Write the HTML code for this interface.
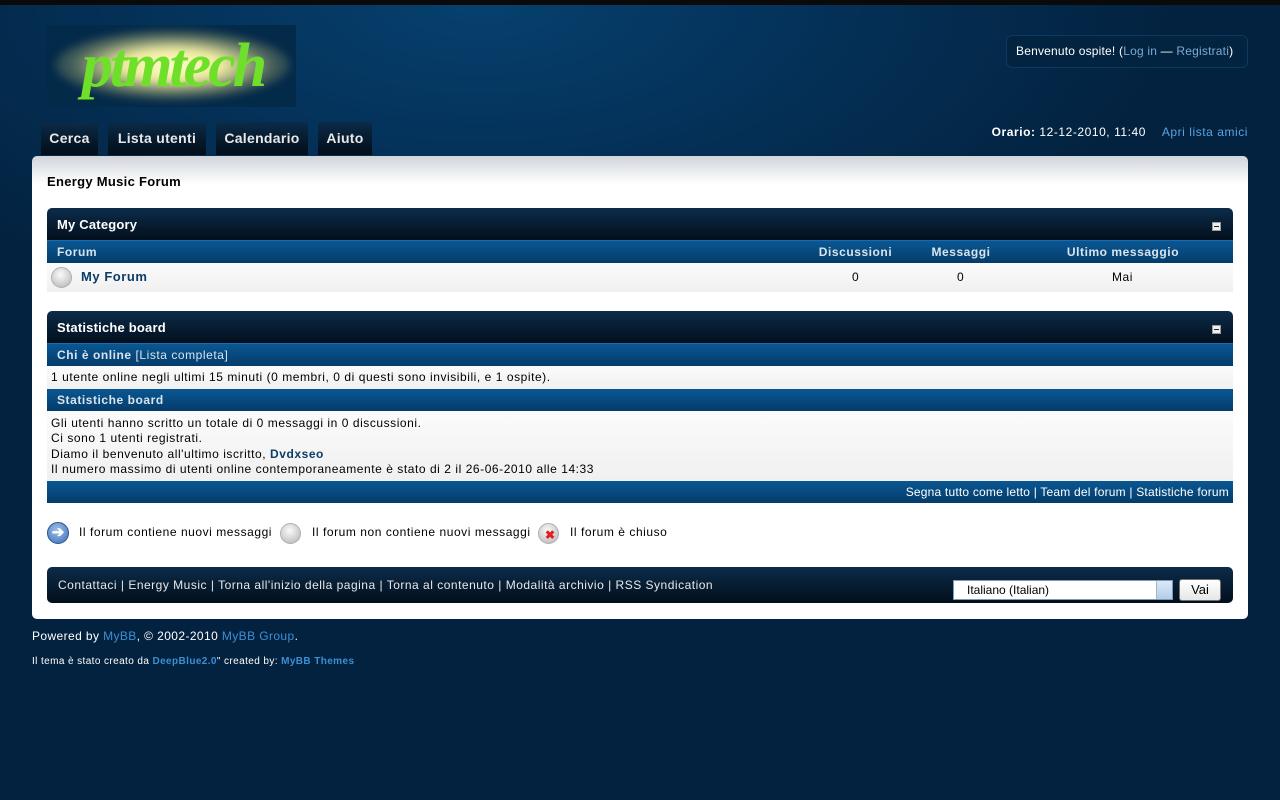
<!DOCTYPE html>
<html><head><meta charset="utf-8"><style>
*{margin:0;padding:0;box-sizing:border-box}
body{width:1280px;height:800px;overflow:hidden;font-family:"Liberation Sans",sans-serif;font-size:12px;letter-spacing:0.55px;color:#000;
background:radial-gradient(ellipse 700px 330px at 480px 0px,#06416e 0%,#04325a 45%,#03223f 100%);background-color:#03223f;position:relative}
.a{position:absolute}
.top{left:0;top:0;width:1280px;height:5px;background:#0a0a0a}
.logo{left:46px;top:25px;width:250px;height:82px;background:#042a4a}
.glow{left:55px;top:30px;width:235px;height:70px;border-radius:50%;background:radial-gradient(ellipse at center,#fffbd0 0%,#f0eca0 30%,rgba(200,200,120,.35) 60%,rgba(4,42,74,0) 80%);filter:blur(4px)}
.logotxt{left:82px;top:30px;font-family:"Liberation Serif",serif;font-size:62px;font-weight:bold;font-style:italic;color:#6fe02a;letter-spacing:-3px;line-height:72px}
.welcome{left:1006px;top:35px;width:242px;height:33px;border:1px solid #0c3a60;border-radius:6px;background:#032440;color:#fff;font-size:12px;line-height:31px;padding-left:9px;letter-spacing:0.2px}
.welcome span{color:#7fa9cf}
.tab{top:122px;height:33px;background:linear-gradient(#0b2b48,#020d18);border-radius:4px 4px 0 0;color:#e8e8e8;font-weight:bold;font-size:14px;line-height:33px;text-align:center;letter-spacing:0.3px}
.orario{right:32px;top:125px;color:#fff;font-size:12px}
.orario span{color:#5aa3e0;margin-left:12px}
.wrap{left:32px;top:156px;width:1216px;height:463px;background:linear-gradient(#d0d5da 0px,#fff 28px);border-radius:5px}
.title{left:47px;top:174px;font-weight:bold;font-size:13px;letter-spacing:0.3px}
.th{left:47px;width:1186px;height:33px;background:linear-gradient(#0c2c4a,#020f1c);border-radius:5px 5px 0 0;color:#fff;font-weight:bold;font-size:13px;line-height:33px;padding-left:10px;border-bottom:1px solid #1a6ab0;letter-spacing:0.2px}
.min{right:12px;top:14px;width:9px;height:9px;background:#eee;border:1px solid #999}
.min:after{content:"";position:absolute;left:1px;top:3px;width:5px;height:1px;background:#222}
.blue{left:47px;width:1186px;height:22px;background:linear-gradient(#0a5792,#043c6b);color:#d8e4ee;font-weight:bold;font-size:12px;line-height:22px;padding-left:10px}
.row{left:47px;width:1186px;background:linear-gradient(#fbfbfb,#f0f0f0);font-size:12px;padding-left:4px}
.ball{width:21px;height:21px;border-radius:50%;background:radial-gradient(circle at 45% 35%,#fafafa,#c8c8c8 70%,#a0a0a0);border:1px solid #b0b0b0}
.bar{left:47px;top:567px;width:1186px;height:36px;background:linear-gradient(#0c2c4a,#020f1c);border-radius:5px;color:#e8e8e8;font-size:12px;line-height:36px;padding-left:11px;letter-spacing:0.5px}
.sel{left:953px;top:580px;width:220px;height:20px;background:#fff;border:1px solid #7a9ab8;font-size:12px;line-height:18px;padding-left:13px;letter-spacing:0}
.selb{right:0;top:0;width:16px;height:18px;background:linear-gradient(#dbe8f7,#b5cde8);border-left:1px solid #9bb}
.btn{left:1179px;top:579px;width:42px;height:22px;background:linear-gradient(#fff,#e6e6e6);border:1px solid #707070;border-radius:3px;font-size:13px;line-height:20px;text-align:center;letter-spacing:0}
.lk{color:#3b8fd6}
</style></head><body>
<div class="a top"></div>
<div class="a logo"></div>
<div class="a glow"></div>
<div class="a logotxt">ptmtech</div>
<div class="a welcome">Benvenuto ospite! (<span>Log in</span> — <span>Registrati</span>)</div>
<div class="a tab" style="left:41px;width:57px">Cerca</div>
<div class="a tab" style="left:108px;width:98px">Lista utenti</div>
<div class="a tab" style="left:216px;width:92px">Calendario</div>
<div class="a tab" style="left:318px;width:54px">Aiuto</div>
<div class="a orario"><b>Orario:</b> 12-12-2010, 11:40 <span>Apri lista amici</span></div>
<div class="a wrap"></div>
<div class="a title">Energy Music Forum</div>

<div class="a th" style="top:208px">My Category<div class="a min"></div></div>
<div class="a blue" style="top:241px">Forum
<span class="a" style="left:756px;width:105px;text-align:center">Discussioni</span>
<span class="a" style="left:864px;width:100px;text-align:center">Messaggi</span>
<span class="a" style="left:1006px;width:140px;text-align:center">Ultimo messaggio</span></div>
<div class="a row" style="top:263px;height:29px">
<div class="a ball" style="left:4px;top:4px"></div>
<span class="a" style="left:34px;top:6px;color:#0b3d67;font-weight:bold;font-size:13px">My Forum</span>
<span class="a" style="left:805px;top:7px">0</span>
<span class="a" style="left:910px;top:7px">0</span>
<span class="a" style="left:1065px;top:7px">Mai</span></div>

<div class="a th" style="top:311px">Statistiche board<div class="a min" style="top:14px"></div></div>
<div class="a blue" style="top:344px">Chi è online <span style="font-weight:normal">[Lista completa]</span></div>
<div class="a row" style="top:366px;height:23px;line-height:23px">1 utente online negli ultimi 15 minuti (0 membri, 0 di questi sono invisibili, e 1 ospite).</div>
<div class="a blue" style="top:389px">Statistiche board</div>
<div class="a row" style="top:411px;height:70px;line-height:15.3px;padding-top:5px">Gli utenti hanno scritto un totale di 0 messaggi in 0 discussioni.<br>Ci sono 1 utenti registrati.<br>Diamo il benvenuto all'ultimo iscritto, <b style="color:#0b3d67">Dvdxseo</b><br>Il numero massimo di utenti online contemporaneamente è stato di 2 il 26-06-2010 alle 14:33</div>
<div class="a blue" style="top:481px;text-align:right;padding-right:4px;font-weight:normal;color:#fff;letter-spacing:0.2px">Segna tutto come letto | Team del forum | Statistiche forum</div>

<div class="a" style="left:47px;top:522px;width:22px;height:22px;border-radius:50%;background:radial-gradient(circle at 45% 35%,#9fc0e8,#3a6fb5);border:1px solid #2a5590;color:#fff;font-size:15px;font-weight:bold;line-height:19px;text-align:center;letter-spacing:0">➔</div>
<div class="a" style="left:79px;top:525px">Il forum contiene nuovi messaggi</div>
<div class="a ball" style="left:280px;top:523px"></div>
<div class="a" style="left:312px;top:525px">Il forum non contiene nuovi messaggi</div>
<div class="a ball" style="left:538px;top:523px"></div>
<div class="a" style="left:545px;top:528px;color:#e02020;font-weight:bold;font-size:12px">✖</div>
<div class="a" style="left:570px;top:525px">Il forum è chiuso</div>

<div class="a bar">Contattaci | Energy Music | Torna all'inizio della pagina | Torna al contenuto | Modalità archivio | RSS Syndication</div>
<div class="a sel">Italiano (Italian)<div class="a selb"></div></div>
<div class="a btn">Vai</div>

<div class="a" style="left:32px;top:629px;color:#fff;letter-spacing:0.4px">Powered by <span class="lk">MyBB</span>, © 2002-2010 <span class="lk">MyBB Group</span>.</div>
<div class="a" style="left:32px;top:656px;color:#fff;font-size:10px;letter-spacing:0.4px">Il tema è stato creato da <b class="lk">DeepBlue2.0</b>" created by: <b class="lk">MyBB Themes</b></div>
</body></html>
